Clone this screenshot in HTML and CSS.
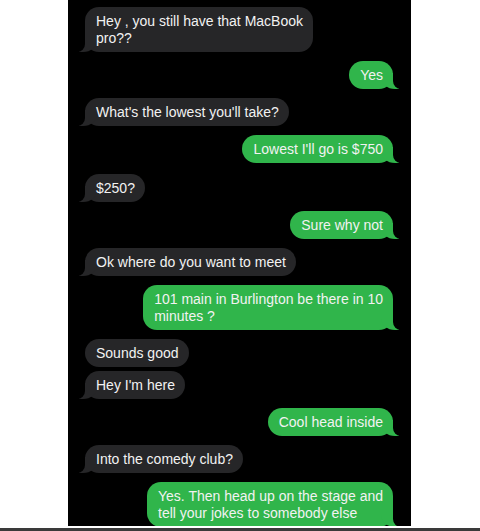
FILE: index.html
```html
<!DOCTYPE html>
<html>
<head>
<meta charset="utf-8">
<link rel="stylesheet" href="styles.css">
</head>
<body>
<div class="page">
  <div class="phone">
    <div class="thread">
      <div class="msg in tail">Hey , you still have that MacBook<br>pro??</div>
      <div class="msg out tail">Yes</div>
      <div class="msg in tail">What's the lowest you'll take?</div>
      <div class="msg out tail">Lowest I'll go is $750</div>
      <div class="msg in tail shift">$250?</div>
      <div class="msg out tail">Sure why not</div>
      <div class="msg in tail">Ok where do you want to meet</div>
      <div class="msg out tail">101 main in Burlington be there in 10<br>minutes ?</div>
      <div class="msg in">Sounds good</div>
      <div class="msg in tail cont">Hey I'm here</div>
      <div class="msg out tail">Cool head inside</div>
      <div class="msg in tail">Into the comedy club?</div>
      <div class="msg out tail">Yes. Then head up on the stage and<br>tell your jokes to somebody else</div>
    </div>
  </div>
  <div class="rule"></div>
</div>
</body>
</html>
```
FILE: styles.css
```css
html, body {
  margin: 0;
  padding: 0;
  background: #ffffff;
}
.page {
  width: 480px;
  height: 531px;
  display: flex;
  flex-direction: column;
  overflow: hidden;
}
.phone {
  margin-left: 68px;
  width: 343px;
  height: 526px;
  background: #000000;
  overflow: hidden;
  flex: none;
}
.rule {
  margin-top: 2px;
  height: 3px;
  background: #3a3a3a;
  flex: none;
}
.thread {
  display: flex;
  flex-direction: column;
  gap: 9px;
  padding: 7px 18px 0 17px;
}
.msg {
  position: relative;
  z-index: 0;
  font-family: "Liberation Sans", Arial, sans-serif;
  font-size: 14px;
  line-height: 17px;
  color: #f2f2f2;
  padding: 5.5px 10px 5.5px 11px;
  border-radius: 14px;
  white-space: nowrap;
}
.in {
  align-self: flex-start;
  background: #262628;
}
.out {
  align-self: flex-end;
  background: #30b54b;
}
.shift { margin-top: 2px; }
.cont { margin-top: -5px; }
.tail::before,
.tail::after {
  content: "";
  position: absolute;
  z-index: -1;
  bottom: 0;
  height: 16px;
}
.in.tail::before {
  left: -6px;
  width: 18px;
  background: #262628;
  border-bottom-right-radius: 14px 12px;
}
.in.tail::after {
  left: -10px;
  width: 10px;
  background: #000000;
  border-bottom-right-radius: 8px;
}
.out.tail::before {
  right: -6px;
  width: 18px;
  background: #30b54b;
  border-bottom-left-radius: 14px 12px;
}
.out.tail::after {
  right: -10px;
  width: 10px;
  background: #000000;
  border-bottom-left-radius: 8px;
}
```
